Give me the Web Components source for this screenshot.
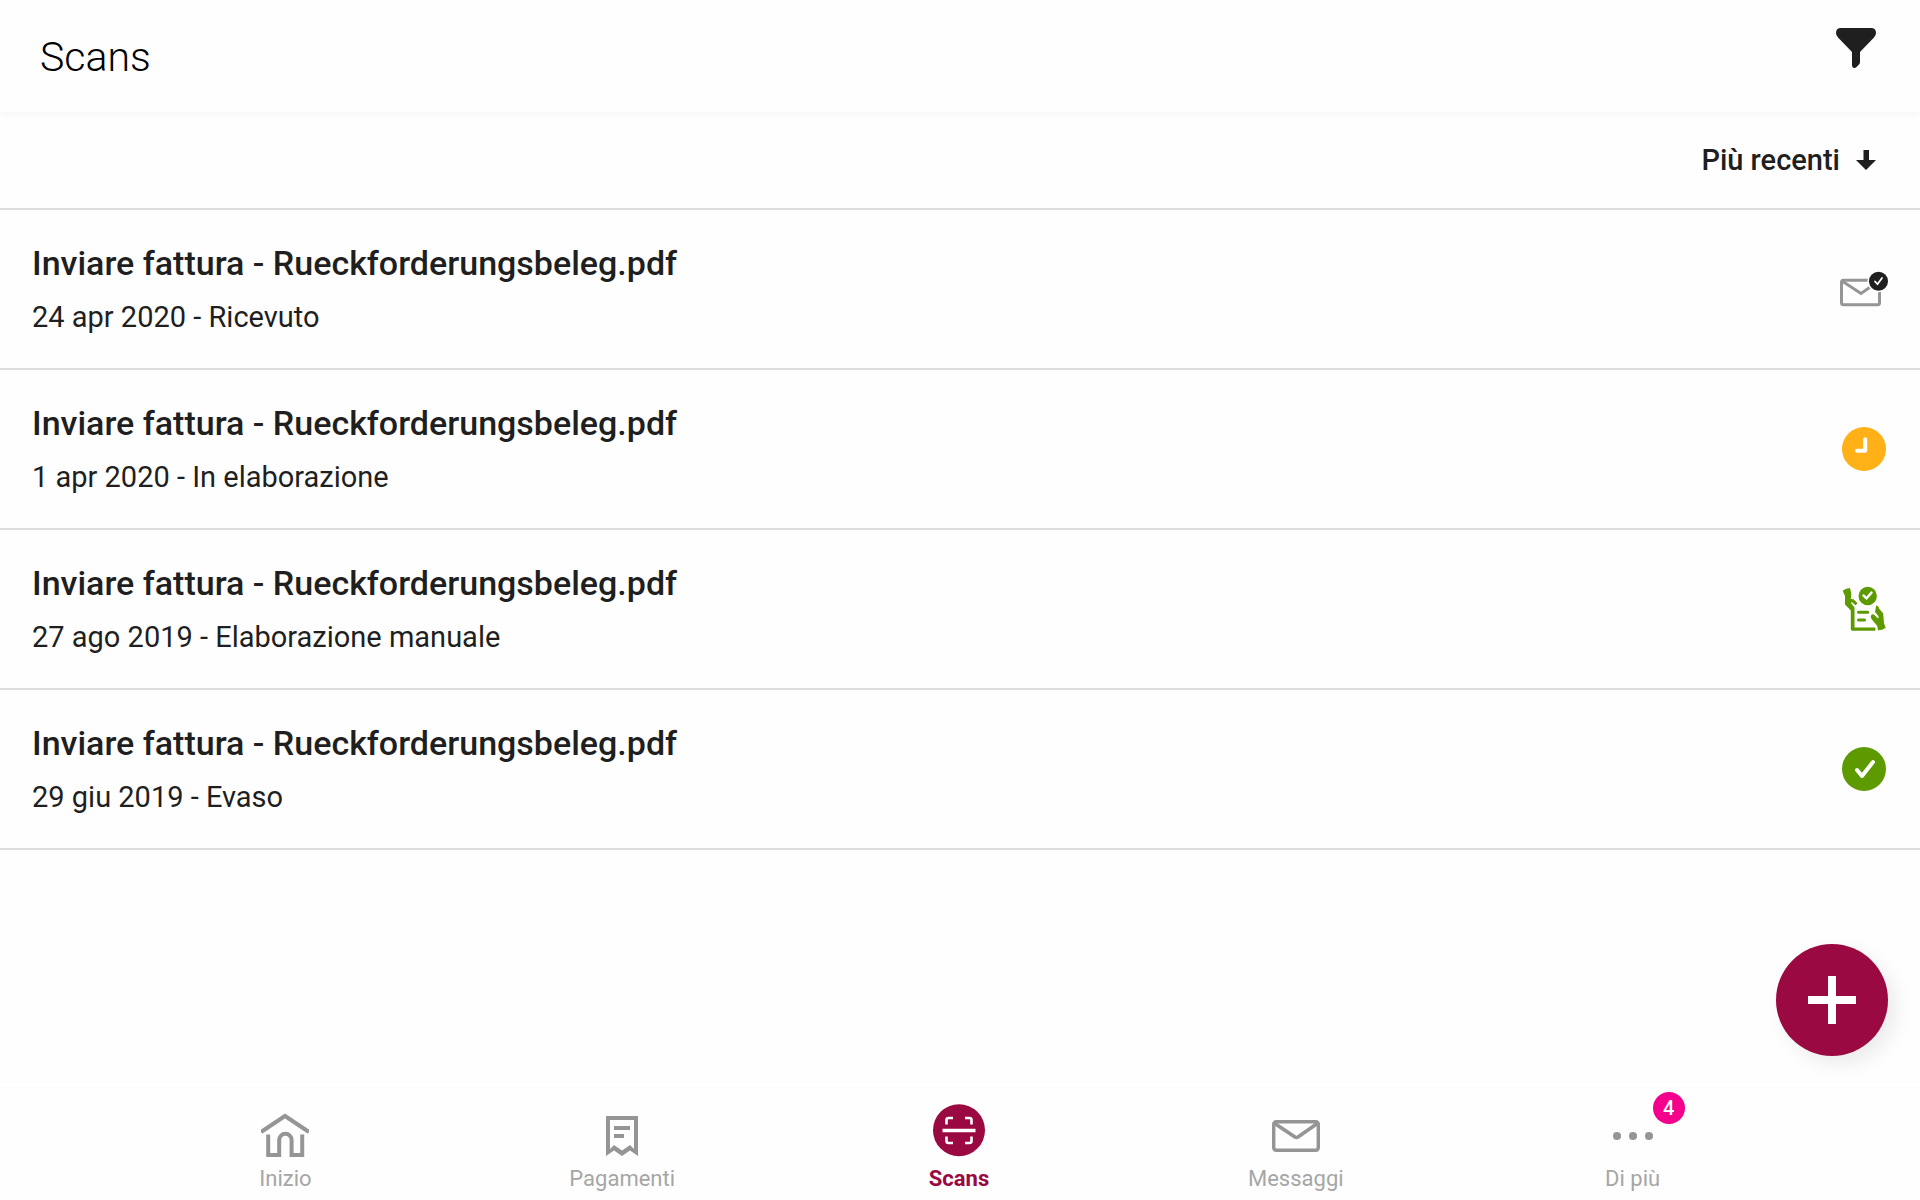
<!DOCTYPE html>
<html lang="it">
<head>
<meta charset="utf-8">
<meta name="viewport" content="width=device-width, initial-scale=1">
<title>Scans</title>
<style>
    body {
        margin: 0;
        background-color: #fefefe;
        color: #1f1f1f;
        font-family: Roboto, "Liberation Sans", sans-serif;
        --brand: #9a0941;
        --line: #dedede;
    }
</style>
</head>
<body>
<scans-page>
    <page-header slot="header">Scans</page-header>
    <sort-bar slot="sort">Più recenti</sort-bar>
    <scan-item icon="received"><span slot="title">Inviare fattura - Rueckforderungsbeleg.pdf</span>24 apr 2020 - Ricevuto</scan-item>
    <scan-item icon="pending"><span slot="title">Inviare fattura - Rueckforderungsbeleg.pdf</span>1 apr 2020 - In elaborazione</scan-item>
    <scan-item icon="manual"><span slot="title">Inviare fattura - Rueckforderungsbeleg.pdf</span>27 ago 2019 - Elaborazione manuale</scan-item>
    <scan-item icon="done"><span slot="title">Inviare fattura - Rueckforderungsbeleg.pdf</span>29 giu 2019 - Evaso</scan-item>
    <add-button slot="action"></add-button>
    <tab-bar slot="tabs">
        <tab-item icon="home">Inizio</tab-item>
        <tab-item icon="receipt">Pagamenti</tab-item>
        <tab-item icon="scan" active>Scans</tab-item>
        <tab-item icon="mail">Messaggi</tab-item>
        <tab-item icon="more" badge="4">Di più</tab-item>
    </tab-bar>
</scans-page>

<script>
const icons = {
    filter: `<svg width="40" height="40" viewBox="0 0 40 40" fill="#1f1f1f"><path d="M5 0H35Q40 0 40 5Q40 7.500 38 9.500L24 24V34Q24 35.500 23 36.500L20.500 39Q19.500 40 18.500 40Q16 40 16 37V24L2 9.500Q0 7.500 0 5Q0 0 5 0Z"/></svg>`,
    arrow: `<svg width="20" height="20" viewBox="0 0 20 20" fill="#1f1f1f"><path d="M7.500 0H13V10H20L10 20L0 10H7.500Z"/></svg>`,
    received: `<svg width="48" height="48" viewBox="0 0 48 48" fill="none"><rect x="1.500" y="15.200" width="38" height="24.500" rx="2" stroke="#959595" stroke-width="3"/><path d="M2 16L21 28.500L39 16" stroke="#959595" stroke-width="3"/><circle cx="38.500" cy="16.200" r="11" fill="#fefefe"/><circle cx="38.500" cy="16.200" r="9.500" fill="#1f1f1f"/><path d="M35 16.500L37.500 19.200L42 13" stroke="#fff" stroke-width="1.800" stroke-linecap="round"/></svg>`,
    pending: `<svg width="48" height="48" viewBox="0 0 48 48" fill="none"><circle cx="24" cy="24" r="22" fill="#ffb117"/><path d="M25.200 14.200V25.800H17" stroke="#fff" stroke-width="4" stroke-linecap="round" stroke-linejoin="round"/></svg>`,
    manual: `<svg width="48" height="48" viewBox="0 0 48 48" fill="#5c9a00"><path d="M2.700 5.700Q6 3 10 3L11.300 8.500L10.800 14L13.500 14.300L17.600 18.300L15.500 20.300L11.800 17L11 18L14.500 22.500V42.500H35Q36.500 44 35 45.800H12.500Q10.800 45.800 10.800 44V25.500L5 19.500V11Z"/><path d="M36.200 20.500Q38.500 20.500 39 23.500L43.200 28.500L44 38.300L45.700 42.700Q42 45.500 38 45.300L37.300 41L31.500 34Q30 31.500 31.300 30Q33 28.500 35 30.500L38 33.500Q39.500 32 37.500 30L35 27Z"/><path d="M18.500 27.300H27.700M18.500 35H24.500" stroke="#5c9a00" stroke-width="3" stroke-linecap="round"/><circle cx="27.700" cy="11" r="9.200"/><path d="M23.500 10.500L26.500 13.300L31.500 7.600" fill="none" stroke="#fff" stroke-width="2.400" stroke-linecap="round"/></svg>`,
    done: `<svg width="48" height="48" viewBox="0 0 48 48" fill="none"><circle cx="24" cy="24" r="22" fill="#5c9a00"/><path d="M17 25L22 31L33 17" stroke="#fff" stroke-width="4" stroke-linecap="round" stroke-linejoin="round"/></svg>`,
    plus: `<svg width="48" height="48" viewBox="0 0 48 48" fill="#fff"><path d="M20 0H28V20H48V28H28V48H20V28H0V20H20Z"/></svg>`,
    home: `<svg width="48" height="48" viewBox="0 0 48 48" fill="none" stroke="#959595" stroke-width="4"><path d="M0 20L24 4L48 20"/><path d="M7.200 22.500V43H18.200V28A6.200 6.200 0 0 1 30.600 28V43H41.200V22.500"/></svg>`,
    receipt: `<svg width="48" height="48" viewBox="0 0 48 48" fill="#959595"><path fill-rule="evenodd" d="M8 4H40V44L32 38.500L24 44L16 38.500L8 44ZM12 8V37L16 33L24 38.500L32 33L36 37V8Z"/><path d="M16 14H32V18H16ZM16 22H26V26H16Z"/></svg>`,
    scan: `<svg width="56" height="56" viewBox="0 0 56 56" fill="none" stroke="#fff" stroke-width="2.600"><circle cx="28" cy="26.200" r="26" fill="#9a0941" stroke="none"/><path d="M15.500 20.500V16Q15.500 14 17.500 14H22M34 14H38.500Q40.500 14 40.500 16V20.500M40.500 32.500V37Q40.500 39 38.500 39H34M22 39H17.500Q15.500 39 15.500 37V32.500"/><path d="M11.500 26.500H44.500" stroke-width="3.400"/></svg>`,
    mail: `<svg width="48" height="48" viewBox="0 0 48 48" fill="none" stroke="#959595"><rect x="1.700" y="9.700" width="44.600" height="28.600" rx="2.500" stroke-width="3.400"/><path d="M2 11L23 25Q24.500 26 26 25L46 11" stroke-width="3.600"/></svg>`,
    more: `<svg width="48" height="48" viewBox="0 0 48 48" fill="#959595"><circle cx="8" cy="24" r="4"/><circle cx="24" cy="24" r="4"/><circle cx="40" cy="24" r="4"/></svg>`
};

// registers a component whose shadow root is filled from html(el)
function define (name, html) {
    window.customElements.define(name, class extends HTMLElement {
        constructor(){
            super();
            const template = document.createElement('template');
            template.innerHTML = html(this);
            this.attachShadow({mode:'open'}).appendChild(template.content.cloneNode(true));
        }
    });
}

define('scans-page', () => `
    <style>
        :host {
            display: flex;
            flex-direction: column;
            min-height: 100vh;
        }
        main {
            flex: 1;
        }
    </style>
    <slot name="header"></slot>
    <main>
        <slot name="sort"></slot>
        <slot></slot>
    </main>
    <slot name="action"></slot>
    <slot name="tabs"></slot>
`);

define('page-header', () => `
    <style>
        :host {
            display: flex;
            justify-content: space-between;
            align-items: flex-start;
            box-sizing: border-box;
            height: 112px;
            padding: 28px 44px 0 40px;
            box-shadow: 0 3px 6px rgba(0,0,0,0.03);
        }
        h1 {
            margin: 0;
            font-size: 41px;
            line-height: 58px;
            font-weight: 300;
            color: #000000;
        }
        button {
            display: flex;
            padding: 0;
            border: none;
            background: none;
            cursor: pointer;
        }
    </style>
    <h1><slot></slot></h1>
    <button type="button" aria-label="Filtro">${icons.filter}</button>
`);

define('sort-bar', () => `
    <style>
        :host {
            display: flex;
            justify-content: flex-end;
            align-items: center;
            height: 96px;
            padding: 0 44px;
            border-bottom: 2px solid var(--line);
        }
        button {
            display: flex;
            align-items: center;
            gap: 16px;
            padding: 0;
            border: none;
            background: none;
            color: inherit;
            font: 500 29px/36px Roboto, "Liberation Sans", sans-serif;
            cursor: pointer;
        }
    </style>
    <button type="button"><slot></slot>${icons.arrow}</button>
`);

define('scan-item', (el) => `
    <style>
        :host {
            display: block;
            border-bottom: 2px solid var(--line);
        }
        a {
            display: flex;
            justify-content: space-between;
            align-items: center;
            height: 158px;
            padding: 0 32px;
            color: inherit;
            text-decoration: none;
        }
        .text {
            display: grid;
            gap: 16px;
        }
        .title {
            font-size: 34px;
            line-height: 40px;
            font-weight: 500;
        }
        .status {
            font-size: 29px;
            line-height: 36px;
        }
    </style>
    <a href="#scan">
        <div class="text">
            <div class="title"><slot name="title"></slot></div>
            <div class="status"><slot></slot></div>
        </div>
        ${icons[el.getAttribute("icon")]}
    </a>
`);

define('add-button', () => `
    <style>
        :host {
            position: fixed;
            right: 32px;
            bottom: 144px;
        }
        button {
            display: grid;
            place-items: center;
            width: 112px;
            height: 112px;
            padding: 0;
            border: none;
            border-radius: 50%;
            background-color: var(--brand);
            box-shadow: 8px 8px 20px rgba(0,0,0,0.08);
            cursor: pointer;
        }
    </style>
    <button type="button" aria-label="Aggiungi">${icons.plus}</button>
`);

define('tab-bar', () => `
    <style>
        :host {
            display: block;
            box-shadow: 0 -1px 1px rgba(0,0,0,0.01);
        }
        nav {
            display: grid;
            grid-template-columns: repeat(5, 1fr);
            height: 112px;
            padding: 0 119px 0 117px;
        }
    </style>
    <nav><slot></slot></nav>
`);

define('tab-item', (el) => `
    <style>
        a {
            display: flex;
            flex-direction: column;
            align-items: center;
            gap: 4px;
            padding-top: 16px;
            color: #a6a6a6;
            font-size: 22px;
            line-height: 30px;
            text-decoration: none;
        }
        :host([active]) a {
            color: var(--brand);
            font-weight: 700;
        }
        .icon {
            position: relative;
            display: flex;
            align-items: flex-end;
            height: 56px;
        }
        .badge {
            position: absolute;
            left: 44px;
            top: -12px;
            width: 32px;
            border-radius: 50%;
            background-color: #f5008c;
            color: #ffffff;
            font-size: 20px;
            line-height: 32px;
            font-weight: 500;
            text-align: center;
        }
    </style>
    <a href="#tab">
        <span class="icon">${icons[el.getAttribute("icon")]}${el.hasAttribute("badge") ? `<span class="badge">${el.getAttribute("badge")}</span>` : ""}</span>
        <slot></slot>
    </a>
`);
</script>
</body>
</html>
